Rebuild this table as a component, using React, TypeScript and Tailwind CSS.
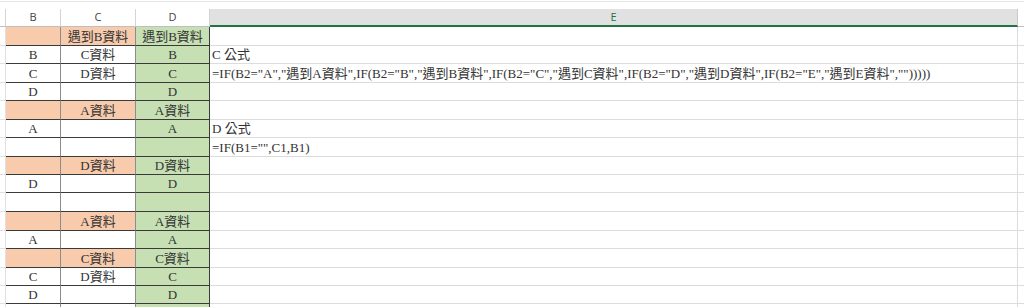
const cellFont = { fontFamily: '"Liberation Serif", "Noto Sans CJK TC", serif' };

type Row = { b: string; c: string; d: string; e?: string; orange?: boolean; h: number };

const rows: Row[] = [
  { b: '', c: '遇到B資料', d: '遇到B資料', orange: true, h: 19 },
  { b: 'B', c: 'C資料', d: 'B', e: 'C 公式', h: 18 },
  {
    b: 'C',
    c: 'D資料',
    d: 'C',
    e: '=IF(B2="A","遇到A資料",IF(B2="B","遇到B資料",IF(B2="C","遇到C資料",IF(B2="D","遇到D資料",IF(B2="E","遇到E資料","")))))',
    h: 19,
  },
  { b: 'D', c: '', d: 'D', h: 18 },
  { b: '', c: 'A資料', d: 'A資料', orange: true, h: 19 },
  { b: 'A', c: '', d: 'A', e: 'D 公式', h: 18 },
  { b: '', c: '', d: '', e: '=IF(B1="",C1,B1)', h: 19 },
  { b: '', c: 'D資料', d: 'D資料', orange: true, h: 18 },
  { b: 'D', c: '', d: 'D', h: 18 },
  { b: '', c: '', d: '', h: 19 },
  { b: '', c: 'A資料', d: 'A資料', orange: true, h: 19 },
  { b: 'A', c: '', d: 'A', h: 18 },
  { b: '', c: 'C資料', d: 'C資料', orange: true, h: 19 },
  { b: 'C', c: 'D資料', d: 'C', h: 18 },
  { b: 'D', c: '', d: 'D', h: 18 },
];

function SheetRow({ row }: { row: Row }) {
  const orange = row.orange ? 'bg-[#f8cbad]' : 'bg-white';
  return (
    <div className={`flex ${row.h === 19 ? 'h-[19px]' : 'h-[18px]'} text-[13px] text-[#333]`} style={cellFont}>
      <div className="w-[6px] shrink-0 border-b border-r border-[#e1e1e1]" />
      <div className={`w-[55px] shrink-0 flex items-end justify-center pb-px leading-[14px] border-b border-r border-b-[#3a3a3a] border-r-[#8c8c8c] ${orange}`}>
        {row.b}
      </div>
      <div className={`w-[75px] shrink-0 flex items-end justify-center pb-px leading-[14px] border-b border-r border-b-[#3a3a3a] border-r-[#8c8c8c] ${orange}`}>
        {row.c}
      </div>
      <div className="w-[74px] shrink-0 flex items-end justify-center pb-px leading-[14px] border-b border-r border-b-[#3a3a3a] border-r-[#3a3a3a] bg-[#c6e0b4]">
        {row.d}
      </div>
      <div className="w-[808px] shrink-0 flex items-end pl-[2px] pb-px leading-[14px] whitespace-nowrap border-b border-r border-[#dcdcdc]">
        {row.e}
      </div>
      <div className="flex-1 border-b border-[#dcdcdc]" />
    </div>
  );
}

export default function App() {
  const headerFont = { fontFamily: '"Open Sans", "Liberation Sans", sans-serif' };
  return (
    <div className="w-[1024px] h-[307px] overflow-hidden bg-white">
      <div className="h-[9px] flex flex-col">
        <div className="h-px" />
        <div className="h-px bg-[#e6e6e6]" />
      </div>
      <div className="flex h-[18px] text-[11px] text-[#444]" style={headerFont}>
        <div className="w-[6px] shrink-0 border-r border-b border-r-[#d4d4d4] border-b-[#bfbfbf]" />
        <div className="w-[55px] shrink-0 flex items-center justify-center border-r border-b border-r-[#d4d4d4] border-b-[#bfbfbf]">B</div>
        <div className="w-[75px] shrink-0 flex items-center justify-center border-r border-b border-r-[#d4d4d4] border-b-[#bfbfbf]">C</div>
        <div className="w-[74px] shrink-0 flex items-center justify-center border-r border-b border-r-[#d4d4d4] border-b-[#bfbfbf]">D</div>
        <div className="w-[808px] shrink-0 flex items-center justify-center bg-[#e1e1e1] text-[#217346] border-r border-r-[#c8c8c8] border-b-2 border-b-[#217346]">
          E
        </div>
        <div className="flex-1 border-b border-[#bfbfbf]" />
      </div>
      {rows.map((row, i) => (
        <SheetRow key={i} row={row} />
      ))}
      <SheetRow row={{ b: '', c: '', d: '', h: 19 }} />
    </div>
  );
}
